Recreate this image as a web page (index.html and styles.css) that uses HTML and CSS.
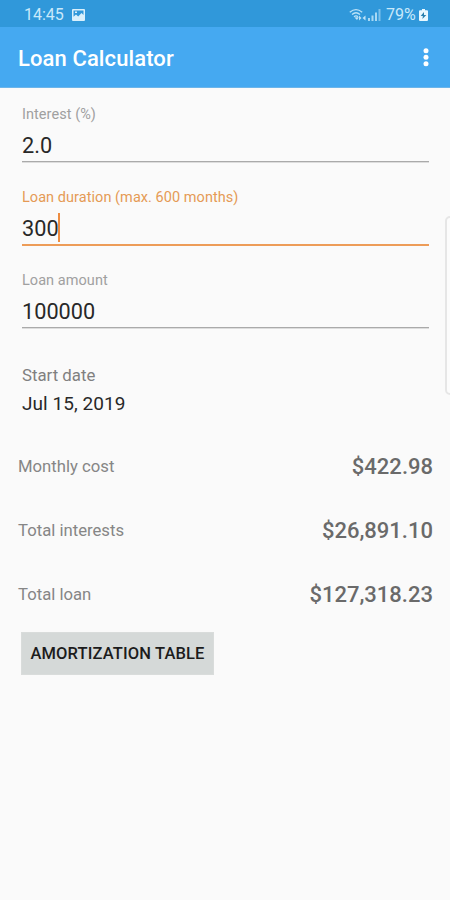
FILE: index.html
```html
<!DOCTYPE html>
<html lang="en">
<head>
<meta charset="utf-8">
<title>Loan Calculator</title>
<link rel="stylesheet" href="styles.css">
</head>
<body>
<div class="status">
  <span class="time">14:45</span>
  <svg class="picture" width="13" height="12" viewBox="0 0 13 12"><path fill="#d9f0fc" fill-rule="evenodd" d="M1 0h11a1 1 0 0 1 1 1v10a1 1 0 0 1-1 1H1a1 1 0 0 1-1-1V1a1 1 0 0 1 1-1zM1.500 1.500v6.200L4 5.500l2.200 2L9.500 4l2 2V1.500zM3 2.500h2v1.500H3z"/></svg>
  <svg class="wifi" width="18" height="14" viewBox="0 0 18 14" fill="none" stroke="#bde2f7" stroke-width="1.300"><path d="M.8 4.200Q7 -1 13.200 4.200M3 6.600Q7 3 11 6.600M5 8.800Q7 7 9 8.800"/><path fill="#bde2f7" stroke="none" d="M5.500 9.500L8 12l2-3zM10 7.500v5l2.500-2.500zM16.500 7.500v5L13.500 10z"/></svg>
  <svg class="signal" width="13" height="12" viewBox="0 0 13 12" fill="#a9d9f4"><path d="M0 9h2v3H0zM3.500 6.500h2V12h-2zM7 3.500h2V12H7z"/><path opacity=".65" d="M10.500 0h2v12h-2z"/></svg>
  <span class="percent">79%</span>
  <svg class="battery" width="9" height="12" viewBox="0 0 9 12"><path fill="#e8f8ff" d="M3 0h3v1.300h2a1 1 0 0 1 1 1V11a1 1 0 0 1-1 1H1a1 1 0 0 1-1-1V2.300a1 1 0 0 1 1-1h2z"/><path fill="#287fae" d="M5 3L1.700 7h2.200l-.5 3L7.300 6H5z"/></svg>
</div>
<header class="appbar">
  <h1>Loan Calculator</h1>
  <svg width="6" height="20" viewBox="0 0 6 20" fill="#fff"><circle cx="3" cy="3.800" r="2.500"/><circle cx="3" cy="10.200" r="2.500"/><circle cx="3" cy="16.700" r="2.500"/></svg>
</header>
<main>
  <section class="fields">
    <div class="field"><span class="label">Interest (%)</span><div class="value"><span>2.0</span></div></div>
    <div class="field active"><span class="label">Loan duration (max. 600 months)</span><div class="value"><span>300</span><i class="caret"></i></div></div>
    <div class="field"><span class="label">Loan amount</span><div class="value"><span>100000</span></div></div>
  </section>
  <section class="date"><span class="date-label">Start date</span><span class="date-value">Jul 15, 2019</span></section>
  <section class="totals">
    <div class="row"><span>Monthly cost</span><b>$422.98</b></div>
    <div class="row"><span>Total interests</span><b>$26,891.10</b></div>
    <div class="row"><span>Total loan</span><b>$127,318.23</b></div>
  </section>
  <button class="table-button"><span>AMORTIZATION TABLE</span></button>
</main>
<div class="edge-handle"></div>
</body>
</html>
```
FILE: styles.css
```css
* { box-sizing: border-box; }
body { margin: 0; width: 450px; height: 900px; overflow: hidden; position: relative; background: #fafafa; font-family: Roboto, sans-serif; }
span, b, h1 { white-space: nowrap; }
svg { display: block; flex: none; }
.status { height: 27px; background: #3098da; display: flex; align-items: center; padding: 2px 22px 0 24px; color: #c9e9fa; font-size: 16px; }
.picture { margin-left: 8px; }
.wifi { margin-left: auto; }
.signal { margin: 0 5px 0 1px; }
.percent { width: 31px; }
.battery { margin-left: 2px; }
.appbar { height: 61px; background: #45a9f1; border-bottom: 1px solid #6cb5ea; display: flex; align-items: center; justify-content: space-between; padding: 0 21px 0 18px; }
h1 { margin: 3px 0 0; font-size: 22px; letter-spacing: .1px; font-weight: 500; color: #fff; line-height: 28px; }
.fields { padding: 15px 21px 0 22px; }
.field { height: 83px; color: #a0a0a0; }
.label { display: block; height: 23px; font-size: 14.500px; line-height: 23px; letter-spacing: .05px; }
.value { height: 36px; padding-top: 5px; border-bottom: 1px solid #aaa; box-shadow: 0 1px 0 #ddd; display: flex; align-items: center; color: #282828; font-size: 21.700px; line-height: 38px; }
.active { color: #e59a55; }
.active .value { height: 37px; border-bottom: 2px solid #ed9c58; box-shadow: none; }
.caret { width: 2px; height: 29px; background: #ed8c40; margin: -3px 0 0 -.5px; }
.date { height: 69px; margin-top: 9px; padding-left: 22px; display: flex; flex-direction: column; }
.date-label { font-size: 16.800px; line-height: 28px; color: #808080; align-self: flex-start; }
.date-value { font-size: 19px; line-height: 30px; color: #282828; align-self: flex-start; letter-spacing: .05px; }
.totals { padding: 4px 17px 0 18px; }
.row { height: 64px; display: flex; justify-content: space-between; align-items: center; font-size: 16.700px; color: #868686; }
.row b { margin-top: 1px; font-size: 22px; font-weight: 500; color: #6a6a6a; }
.table-button { display: flex; align-items: center; justify-content: center; margin: 6px 0 0 21px; width: 193px; height: 43px; border: 1px solid #d9dcdb; background: #d5d9d8; padding: 0; color: #1c1c1c; font: 500 16.500px Roboto, sans-serif; letter-spacing: .13px; }
.edge-handle { position: absolute; left: 445px; top: 216px; width: 10px; height: 179px; border: 2px solid #e6e6e6; border-radius: 5px; background: #fcfcfc; }
```
